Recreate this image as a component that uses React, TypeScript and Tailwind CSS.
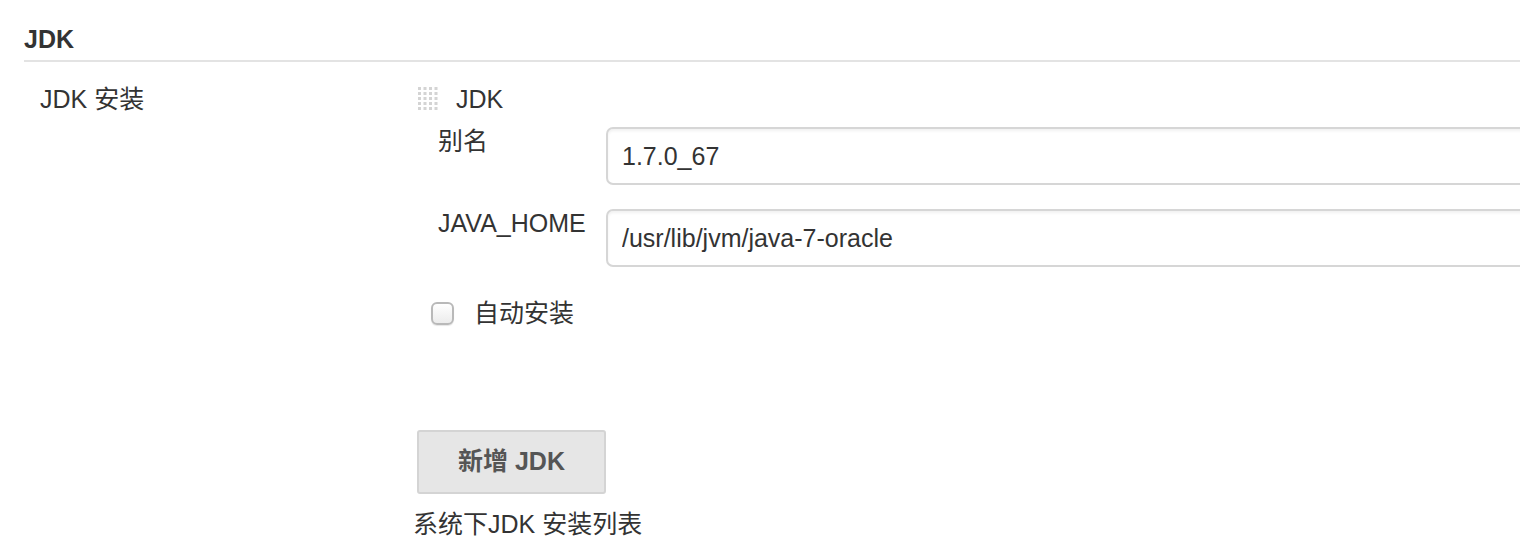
import { useState } from "react";

function GripIcon() {
    const dots = [];
    for (let r = 0; r < 5; r++) {
        for (let c = 0; c < 4; c++) {
            dots.push(<rect key={`${r}-${c}`} x={c * 5.5} y={r * 5} width="3" height="3" fill="#d4d4d4" />)
        }
    }
    return <svg width="22" height="24" viewBox="0 0 22 24">{dots}</svg>
}

function Campo({ label, value }: { label: string, value: string }) {
    return <div className="flex items-start">
        <label className="w-[190px] pl-[22px] shrink-0">{label}</label>
        <input
            defaultValue={value}
            className="flex-1 h-[58px] -mr-[20px] rounded-[7px] border-2 border-[#d6d6d6] bg-white px-[14px] text-[25px] text-[#333] shadow-[inset_0_2px_3px_rgba(0,0,0,0.06)] outline-none"
        />
    </div>
}

function App() {
    const [auto, setAuto] = useState<boolean>(false)
    return <main className="h-[550px] w-full overflow-hidden bg-white text-[25px] text-[#333] font-['Liberation_Sans','Noto_Sans_CJK_SC',sans-serif]">
        <header className="pl-[24px] pt-[25px]">
            <h1 className="font-bold text-[25px] leading-[28px]">JDK</h1>
            <div className="mt-[7px] h-[2px] bg-[#e3e3e3]" />
        </header>
        <section className="flex pt-[22px]">
            <div className="w-[416px] shrink-0 pl-[40px] leading-[30px]">JDK 安装</div>
            <div className="flex-1">
                <div className="flex items-center gap-[16px] pl-[2px] leading-[30px]">
                    <GripIcon />
                    <span>JDK</span>
                </div>
                <div className="mt-[13px] flex flex-col gap-[24px] leading-[28px]">
                    <Campo label="别名" value="1.7.0_67" />
                    <Campo label="JAVA_HOME" value="/usr/lib/jvm/java-7-oracle" />
                </div>
                <label className="mt-[31px] flex items-center gap-[20px] pl-[15px] leading-[30px]">
                    <span
                        onClick={() => setAuto(!auto)}
                        className="h-[23px] w-[23px] rounded-[6px] border-2 border-[#b9b9b9] bg-gradient-to-b from-white to-[#ececec] shadow-[0_1px_1px_rgba(0,0,0,0.1)]"
                    />
                    <span>自动安装</span>
                </label>
                <button className="mt-[102px] ml-[1px] h-[64px] w-[189px] rounded-[3px] border-2 border-[#d4d4d4] bg-[#e6e6e6] font-bold text-[#555] text-[25px]">
                    新增 JDK
                </button>
                <p className="mt-[15px] -ml-[3px] leading-[30px]">系统下JDK 安装列表</p>
            </div>
        </section>
    </main>
}
export default App
